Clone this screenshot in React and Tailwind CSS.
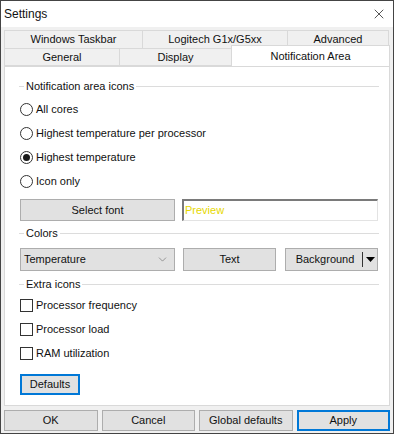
import React from 'react';
import { X, ChevronDown } from 'lucide-react';

const font = { fontFamily: '"Liberation Sans", Arial, sans-serif' };

const GroupLabel = ({ children }) => (
  <div className="flex items-center h-[16px] pr-[8px]">
    <div className="w-[5px] h-px bg-[#dcdcdc]" />
    <span className="px-[2px] leading-[16px]">{children}</span>
    <div className="flex-1 h-px bg-[#dcdcdc]" />
  </div>
);

const Radio = ({ label, checked }) => (
  <div className="flex items-center h-[24px]">
    <div className="w-[13px] h-[13px] rounded-full border border-[#333] bg-white flex items-center justify-center">
      {checked && <div className="w-[7px] h-[7px] rounded-full bg-[#1a1a1a]" />}
    </div>
    <span className="ml-[3px]">{label}</span>
  </div>
);

const Check = ({ label }) => (
  <div className="flex items-center h-[24px]">
    <div className="w-[13px] h-[13px] border border-[#333] bg-white" />
    <span className="ml-[3px]">{label}</span>
  </div>
);

const Tab = ({ w, children }) => (
  <div className={`${w} h-full border border-[#d9d9d9] -ml-px first:ml-0 bg-[#f0f0f0] flex items-center justify-center`}>
    {children}
  </div>
);

const BottomButton = ({ children, primary }) => (
  <button
    className={`h-[21px] bg-[#e1e1e1] flex items-center justify-center ${
      primary ? 'border-2 border-[#0078d7]' : 'border border-[#adadad]'
    }`}
  >
    {children}
  </button>
);

export default function App() {
  return (
    <div
      className="w-[394px] h-[434px] border border-[#444] bg-[#f0f0f0] flex flex-col text-[11px] text-[#111]"
      style={font}
    >
      <div className="h-[26px] bg-white flex items-center justify-between pl-[3px] pr-[6px] shrink-0">
        <span className="text-[12px]">Settings</span>
        <X size={16} strokeWidth={1} className="text-black" />
      </div>

      <div className="px-[3px] flex flex-col flex-1">
        <div className="mt-[3px] h-[19px] flex">
          <Tab w="w-[139px]">Windows Taskbar</Tab>
          <Tab w="w-[146px]">Logitech G1x/G5xx</Tab>
          <Tab w="w-[102px]">Advanced</Tab>
        </div>
        <div className="h-[18px] flex -mt-px">
          <Tab w="w-[116px]">General</Tab>
          <Tab w="w-[113px]">Display</Tab>
          <div className="w-[159px] -ml-px h-[21px] -mt-[3px] border border-b-0 border-[#d9d9d9] bg-white flex items-start justify-center pt-[2px] relative z-10">
            Notification Area
          </div>
        </div>

        <div className="h-[340px] border border-[#d9d9d9] bg-white pt-[11px] pl-[14px] pr-[2px] flex flex-col">
          <GroupLabel>Notification area icons</GroupLabel>
          <div className="mt-[3px] pl-[1px]">
            <Radio label="All cores" />
            <Radio label="Highest temperature per processor" />
            <Radio label="Highest temperature" checked />
            <Radio label="Icon only" />
          </div>

          <div className="mt-[6px] flex pl-[1px]">
            <button className="w-[155px] h-[22px] bg-[#e1e1e1] border border-[#adadad] flex items-center justify-center">
              Select font
            </button>
            <div className="ml-[7px] w-[196px] h-[22px] bg-white border border-[#e3e3e3] border-t-[#7a7a7a] border-l-[#7a7a7a] border-t-2 border-l-2 flex items-center pl-[1px] text-[#e6d800]">
              Preview
            </div>
          </div>

          <div className="mt-[4px]">
            <GroupLabel>Colors</GroupLabel>
          </div>

          <div className="mt-[7px] flex pl-[1px]">
            <div className="w-[155px] h-[23px] bg-[#e1e1e1] border border-[#adadad] flex items-center justify-between pl-[3px] pr-[5px]">
              <span>Temperature</span>
              <ChevronDown size={13} strokeWidth={1} className="text-[#555]" />
            </div>
            <button className="ml-[8px] w-[93px] h-[23px] bg-[#e1e1e1] border border-[#adadad] flex items-center justify-center">
              Text
            </button>
            <button className="ml-[9px] w-[93px] h-[23px] bg-[#e1e1e1] border border-[#adadad] flex items-center">
              <span className="flex-1 text-center pl-[2px]">Background</span>
              <span className="w-px h-[15px] bg-[#333]" />
              <span className="w-[14px] flex items-center justify-center">
                <svg width="9" height="5" viewBox="0 0 9 5">
                  <path d="M0 0 H9 L4.5 5 Z" fill="#000" />
                </svg>
              </span>
            </button>
          </div>

          <div className="mt-[5px]">
            <GroupLabel>Extra icons</GroupLabel>
          </div>

          <div className="mt-[1px] pl-[1px]">
            <Check label="Processor frequency" />
            <Check label="Processor load" />
            <Check label="RAM utilization" />
          </div>

          <div className="mt-[9px] pl-[1px]">
            <button className="w-[60px] h-[21px] bg-[#e1e1e1] border-2 border-[#0078d7] flex items-center justify-center">
              Defaults
            </button>
          </div>
        </div>

        <div className="mt-[4px] grid grid-cols-4 gap-[4px]">
          <BottomButton>OK</BottomButton>
          <BottomButton>Cancel</BottomButton>
          <BottomButton>Global defaults</BottomButton>
          <BottomButton primary>Apply</BottomButton>
        </div>
      </div>
    </div>
  );
}
